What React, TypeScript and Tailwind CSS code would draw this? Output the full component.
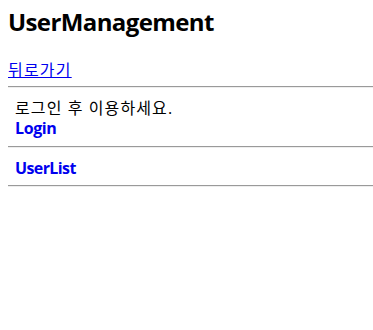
export default function App() {
  const font = { fontFamily: '"Open Sans", "Noto Sans CJK KR", sans-serif' };
  return (
    <div className="w-[373px] h-[330px] bg-white text-black" style={font}>
      <div className="pl-2 pt-[7px]">
        <h2 className="text-[24px] font-bold leading-[30px] tracking-[-0.6px]">UserManagement</h2>
      </div>
      <div className="pl-2 mt-[23px] leading-[20px] text-[16px]">
        <a href="#" className="text-[#0000ee] underline tracking-[1.2px]">뒤로가기</a>
      </div>
      <div className="pl-2 mt-[6px]">
        <div className="h-[2px] border-t border-t-[#9a9a9a] border-b border-b-[#eeeeee]" />
        <div className="pl-[7px] pt-[10px] pb-[8px] text-[16px] leading-[20px]">
          <div className="tracking-[1.1px]">로그인 후 이용하세요.</div>
          <div className="font-bold text-[#0000ee] tracking-[-0.4px]">Login</div>
        </div>
        <div className="h-[2px] border-t border-t-[#9a9a9a] border-b border-b-[#eeeeee]" />
        <div className="pl-[7px] pt-[10px] pb-[7px] text-[16px] leading-[20px]">
          <div className="font-bold text-[#0000ee] tracking-[-0.6px]">UserList</div>
        </div>
        <div className="h-[2px] border-t border-t-[#9a9a9a] border-b border-b-[#eeeeee]" />
      </div>
    </div>
  );
}
